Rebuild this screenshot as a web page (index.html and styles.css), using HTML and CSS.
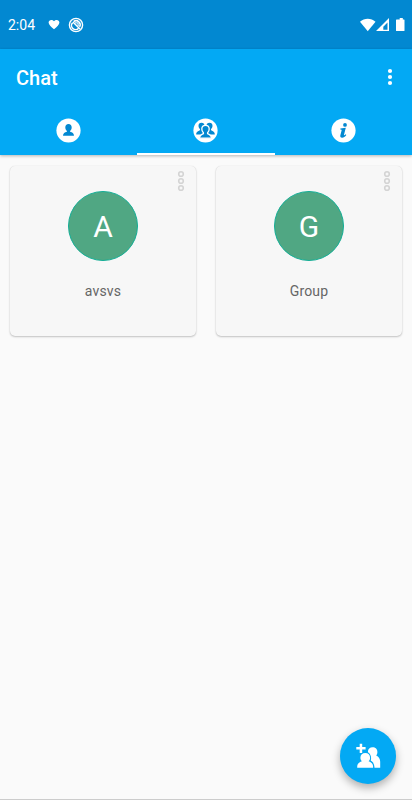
FILE: index.html
```html
<!DOCTYPE html>
<html lang="en">
<head>
<meta charset="utf-8">
<title>Chat</title>
<link rel="stylesheet" href="styles.css">
</head>
<body>
<div class="status">
  <span class="time">2:04</span>
  <svg class="heart" width="12" height="11" viewBox="0 0 12 11"><path d="M6 10.300C3 7.600.6 5.700.6 3.500.6.700 4.200-.1 6 2.300 7.800-.1 11.400.700 11.400 3.500c0 2.200-2.400 4.100-5.400 6.800z" fill="#fff"/></svg>
  <svg class="sync" width="16" height="16" viewBox="0 0 16 16" fill="none" stroke="#fff"><circle cx="8" cy="8" r="6.600" stroke-width="1.400"/><path d="M10.600 11.300A4 4 0 0 1 4.600 5.800M5.600 4.700A4 4 0 0 1 11.600 9.800" stroke-width="1.500"/><path d="M5 5l7 7" stroke-width="1.500"/><path d="M7 5.800l3 .2.200 3" stroke-width="1.100"/></svg>
  <svg class="signals" width="46" height="14" viewBox="0 0 46 14" fill="#fff"><path d="M0 3.800C4.300-.3 11.200-.3 15.500 3.800L7.750 13.300z"/><path fill-rule="evenodd" d="M16 13L29 0v13zM23.300 11.700h4.200V4.600L23.300 8.700z"/><path d="M38 1.400h1.700V0h3.100v1.400H44q.5 0 .5.600v10.400q0 .6-.6.600h-7.300q-.6 0-.6-.6V2q0-.6.600-.6z"/></svg>
</div>
<header class="appbar">
  <div class="titlebar">
    <h1>Chat</h1>
    <svg width="6" height="18" viewBox="0 0 6 18" fill="#fff"><circle cx="3" cy="3" r="2.100"/><circle cx="3" cy="9" r="2.100"/><circle cx="3" cy="15" r="2.100"/></svg>
  </div>
  <nav class="tabs">
    <div class="tab"><svg width="25" height="25" viewBox="0 0 25 25"><circle cx="12.500" cy="12.500" r="12.100" fill="#fff"/><path d="M12.500 6c2 0 3.200 1.400 3.200 3.400 0 1.600-.7 2.700-1.600 3.500v.8c2.200.8 3.900 1.300 3.900 4.100H7c0-2.800 1.700-3.300 3.900-4.100v-.8c-.9-.8-1.600-1.900-1.600-3.500 0-2 1.200-3.400 3.200-3.400z" fill="#0288d1"/></svg></div>
    <div class="tab active"><svg width="25" height="25" viewBox="0 0 25 25"><circle cx="12.500" cy="12.500" r="12.100" fill="#fff"/><g fill="#0288d1"><path d="M8.500 4.700c1.900 0 3 1.200 3 3.100 0 1.500-.6 2.500-1.300 3.300v1.100c1.600.8 3 1.200 3 4.300H3.200c0-2.800 1.900-3.300 3.800-4.200v-1.200C6.200 10.300 5.500 9.300 5.500 7.800c0-1.900 1.100-3.100 3-3.100z"/><path d="M16.500 4.700c1.900 0 3 1.200 3 3.100 0 1.500-.7 2.500-1.500 3.300v1.200c1.900.9 3.800 1.400 3.800 4.200h-10c0-3.100 1.400-3.500 3-4.300v-1.100c-.7-.8-1.300-1.800-1.300-3.300 0-1.900 1.100-3.100 3-3.100z"/><path stroke="#fff" stroke-width="1.300" d="M12.500 7.300c2.300 0 3.700 1.500 3.700 3.700 0 1.700-.7 2.800-1.600 3.700v1c2.200.9 3.900 1.700 3.900 4.500H6.500c0-2.800 1.700-3.600 3.900-4.500v-1c-.9-.9-1.600-2-1.600-3.700 0-2.200 1.400-3.700 3.700-3.700z"/></g></svg></div>
    <div class="tab"><svg width="25" height="25" viewBox="0 0 25 25"><circle cx="12.500" cy="12.500" r="12.100" fill="#fff"/><g fill="#0288d1"><circle cx="14" cy="6.900" r="1.900"/><path d="M9.400 10.500l5.400-.7-1.800 7c-.2.900.5.700 1.700-.5l.6.600c-1.300 1.800-2.700 2.800-4.200 2.800-1.700 0-2.100-1-1.700-2.600l1.200-4.600c.2-.8-.1-1-1.400-1z"/></g></svg></div>
  </nav>
</header>
<main class="grid">
  <section class="card">
    <svg class="more" width="8" height="22" viewBox="0 0 8 22"><circle cx="4" cy="4" r="2.300"/><circle cx="4" cy="11" r="2.300"/><circle cx="4" cy="18" r="2.300"/></svg>
    <div class="avatar">A</div>
    <div class="name">avsvs</div>
  </section>
  <section class="card">
    <svg class="more" width="8" height="22" viewBox="0 0 8 22"><circle cx="4" cy="4" r="2.300"/><circle cx="4" cy="11" r="2.300"/><circle cx="4" cy="18" r="2.300"/></svg>
    <div class="avatar">G</div>
    <div class="name">Group</div>
  </section>
</main>
<div class="fab"><svg width="26" height="26" viewBox="0 0 26 26" fill="#fff"><path d="M3.700.7h2.500v3.400h3.400v2.500H6.200V10H3.700V6.600H.3V4.100h3.400z"/><path d="M12 9.300c-.4-3 1.700-5.100 4.500-5.100 3 0 4.900 2.100 4.900 4.700 0 1.500-.4 2.700-1.200 3.600 2.500 1 4 3.300 4 6.300v6h-5.700c-.2-3.500-1.200-5.800-3.800-7.200 1.100-3.600-.1-6.500-2.700-8.300z"/><path d="M9.300 10c2.900 0 4.800 2 4.800 4.700 0 1.500-.5 2.700-1.500 3.500 3 .9 4.500 3 4.500 5.300v1.300H1.200v-1.300c0-2.400 1.600-4.400 4.700-5.300-1-.8-1.500-2-1.500-3.500C4.400 12 6.400 10 9.300 10z"/></svg></div>
<div class="edge"></div>
</body>
</html>
```
FILE: styles.css
```css
* { box-sizing: border-box; }
body {
  margin: 0;
  height: 800px;
  display: flex;
  flex-direction: column;
  overflow: hidden;
  background: #fafafa;
  font-family: Roboto, sans-serif;
}
svg { display: block; flex: none; }
.status {
  height: 49px;
  flex: none;
  display: flex;
  align-items: center;
  padding: 0 6px 0 8px;
  background: #0288d1;
  color: #fff;
}
.time { width: 40px; font-size: 14px; line-height: 20px; padding-top: 1px; }
.sync { margin-left: 8px; }
.signals { margin-left: auto; }
.appbar {
  height: 106px;
  flex: none;
  background: #03a9f4;
  color: #fff;
  box-shadow: 0 1px 3px rgba(0, 0, 0, .28);
}
.titlebar {
  height: 56px;
  display: flex;
  align-items: center;
  justify-content: space-between;
  padding: 0 19px 0 16px;
}
h1 { margin: 2px 0 0; font-size: 20px; line-height: 24px; font-weight: 500; }
.tabs { height: 50px; display: grid; grid-template-columns: repeat(3, 1fr); }
.tab { display: flex; justify-content: center; align-items: flex-start; padding-top: 13px; }
.active { border-bottom: 2px solid #fff; }
.grid {
  display: grid;
  grid-template-columns: 186px 186px;
  gap: 20px;
  padding: 11px 10px 0;
}
.card {
  height: 170px;
  position: relative;
  display: flex;
  flex-direction: column;
  align-items: center;
  padding-top: 25px;
  border-radius: 5px;
  background: #f7f7f7;
  box-shadow: 0 1px 2px rgba(0, 0, 0, .22), 0 0 1px rgba(0, 0, 0, .13);
}
.more { position: absolute; right: 11px; top: 4px; fill: none; stroke: #d4d4d4; stroke-width: 1.600; }
.avatar {
  width: 70px;
  height: 70px;
  border: 1px solid #13ae96;
  border-radius: 50%;
  background: #50a783;
  color: #fff;
  font-size: 30px;
  line-height: 69px;
  text-align: center;
}
.name { margin-top: 20px; font-size: 14px; line-height: 20px; color: #666; letter-spacing: .15px; }
.fab {
  position: absolute;
  left: 340px;
  top: 727.5px;
  width: 56px;
  height: 56px;
  display: flex;
  align-items: center;
  justify-content: center;
  padding-left: 1px;
  border-radius: 50%;
  background: #03a9f4;
  box-shadow: 0 4px 8px rgba(0, 0, 0, .3);
}
.edge { height: 1px; margin-top: auto; background: #ccc; flex: none; }
```
